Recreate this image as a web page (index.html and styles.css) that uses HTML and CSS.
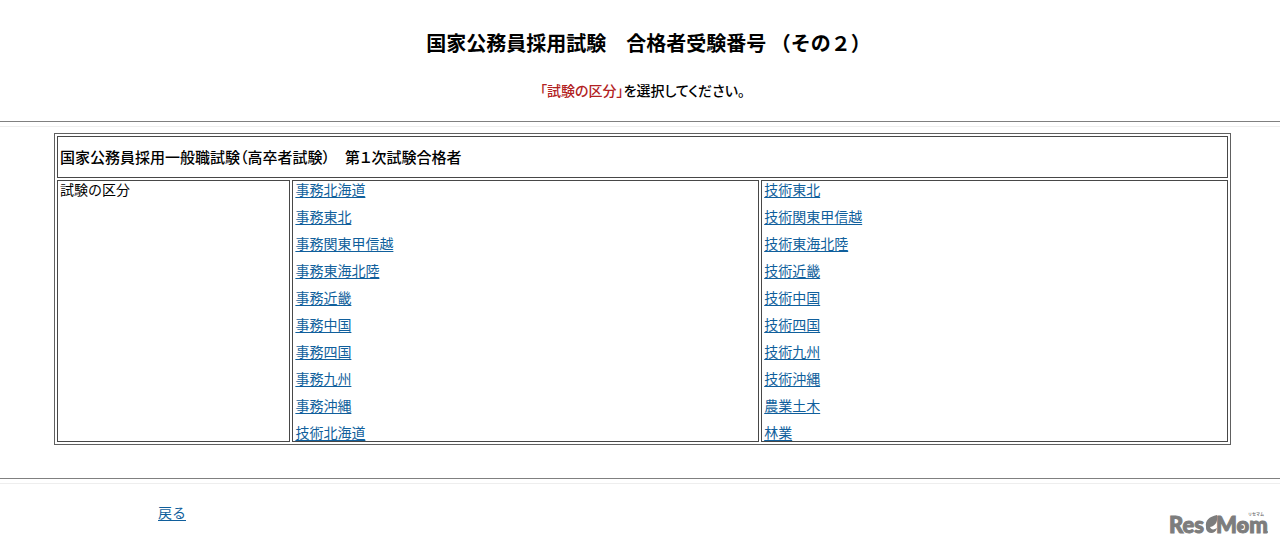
FILE: index.html
```html
<!DOCTYPE html>
<html lang="ja">
<head>
<meta charset="utf-8">
<meta name="viewport" content="width=device-width, initial-scale=1">
<title>国家公務員採用試験　合格者受験番号 （その２）</title>
<link rel="stylesheet" href="styles.css">
</head>
<body>
<header class="page-header">
  <h1 class="title">国家公務員採用試験　合格者受験番号 （その２）</h1>
  <p class="lead"><span class="accent">「試験の区分」</span>を選択してください。</p>
</header>
<hr class="rule">
<main class="content">
  <table class="exams">
    <colgroup><col class="col-label"><col class="col-list"><col class="col-list"></colgroup>
    <tr><th class="exam-name" colspan="3">国家公務員採用一般職試験（高卒者試験）　第１次試験合格者</th></tr>
    <tr>
      <td>試験の区分</td>
      <td>
        <ul class="links">
          <li><a href="#">事務北海道</a></li>
          <li><a href="#">事務東北</a></li>
          <li><a href="#">事務関東甲信越</a></li>
          <li><a href="#">事務東海北陸</a></li>
          <li><a href="#">事務近畿</a></li>
          <li><a href="#">事務中国</a></li>
          <li><a href="#">事務四国</a></li>
          <li><a href="#">事務九州</a></li>
          <li><a href="#">事務沖縄</a></li>
          <li><a href="#">技術北海道</a></li>
        </ul>
      </td>
      <td>
        <ul class="links">
          <li><a href="#">技術東北</a></li>
          <li><a href="#">技術関東甲信越</a></li>
          <li><a href="#">技術東海北陸</a></li>
          <li><a href="#">技術近畿</a></li>
          <li><a href="#">技術中国</a></li>
          <li><a href="#">技術四国</a></li>
          <li><a href="#">技術九州</a></li>
          <li><a href="#">技術沖縄</a></li>
          <li><a href="#">農業土木</a></li>
          <li><a href="#">林業</a></li>
        </ul>
      </td>
    </tr>
  </table>
</main>
<hr class="rule">
<footer class="page-footer">
  <a href="#">戻る</a>
  <svg class="logo" width="104" height="34" viewBox="0 0 104 34" role="img" aria-label="ReseMom">
    <text class="logo-word" x="3" y="25">Res</text>
    <path class="logo-leaf" d="M40 19 C39 12 43 9 51 7 C52 13 50 18 44 19 C45 22 48 22 51 20 C50 25 45 26 42 24 C40 22 40 21 40 19 Z"/>
    <text class="logo-word" x="50" y="25">Mom</text>
    <circle class="logo-leaf" cx="76" cy="19" r="2"/>
    <circle class="logo-leaf" cx="101" cy="24" r="1"/>
    <text class="logo-ruby" x="82" y="8">リセマム</text>
  </svg>
</footer>
</body>
</html>
```
FILE: styles.css
```css
body {
  margin: 0;
  background: #fff;
  color: #000;
  font-family: "Noto Sans CJK JP", sans-serif;
  font-size: 14px;
  line-height: 17px;
}

a {
  color: #105f9c;
  text-underline-offset: 2px;
}

.page-header {
  padding: 31px 0 22px 5px;
  text-align: center;
}

.title {
  margin: 0;
  padding-left: 12px;
  font-size: 20px;
  line-height: 24px;
}

.lead {
  margin: 26px 0 0;
  font-size: 14px;
  font-weight: 500;
  line-height: 18px;
  font-feature-settings: "palt";
}

.accent {
  color: #b22222;
}

.rule {
  height: 4px;
  margin: 0;
  border: 0 solid #808080;
  border-top-width: 1px;
  border-bottom: 1px solid #eee;
}

.content {
  padding: 6px 49px 33px 54px;
}

.exams {
  width: 100%;
  border: 1px solid #606060;
  border-spacing: 2px;
  table-layout: fixed;
}

.exams th,
.exams td {
  padding: 0 2px;
  border: 1px solid #484848;
  text-align: left;
  vertical-align: top;
}

.col-label {
  width: 20%;
}

.col-list {
  width: 40%;
}

.exams .exam-name {
  padding: 10px 2px;
  font-size: 15px;
  font-weight: 500;
  line-height: 20px;
  font-feature-settings: "palt";
}

.links {
  display: grid;
  gap: 10px;
  margin: 0;
  padding: 0;
  list-style: none;
}

.page-footer {
  display: flex;
  align-items: flex-start;
  justify-content: space-between;
  padding: 20px 10px 5px 158px;
}

.logo {
  margin-top: 4px;
}

.logo-word {
  fill: #7d7d7d;
  stroke: #7d7d7d;
  font: 900 22px Lato, sans-serif;
}

.logo-leaf {
  fill: #7d7d7d;
}

.logo-ruby {
  fill: #7d7d7d;
  font: bold 4px "Noto Sans CJK JP", sans-serif;
}
```
